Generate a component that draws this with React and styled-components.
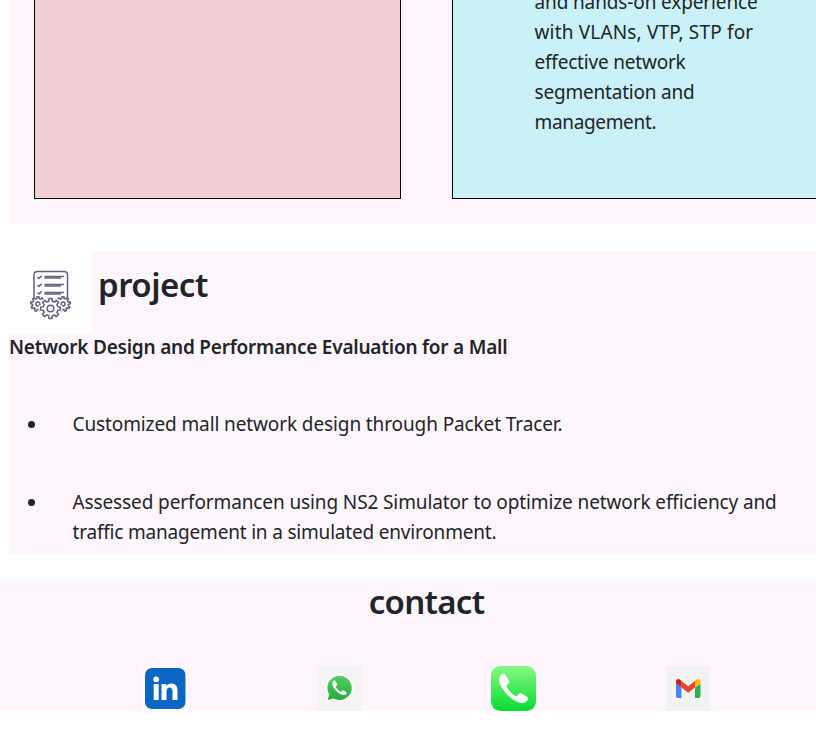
import React from 'react';
import styled, { createGlobalStyle } from 'styled-components';

const GlobalStyle = createGlobalStyle`
  * { box-sizing: border-box; }
  html, body { margin: 0; background: #fff; overflow: hidden; }
  body {
    font-family: "Noto Sans", "Open Sans", sans-serif;
    font-size: 19px;
    line-height: 30px;
    color: #212529;
  }
`;

const Page = styled.main`
  width: 816px;
  height: 733px;
  overflow: hidden;
`;

const Skills = styled.section`
  display: flex;
  align-items: flex-end;
  gap: 51px;
  height: 224px;
  margin-left: 9px;
  padding: 0 0 25px 25px;
  background: #fff5fd;
  overflow: hidden;
`;

const Card = styled.article`
  flex: none;
  display: flex;
  flex-direction: column;
  justify-content: flex-end;
  width: 367px;
  height: 240px;
  padding: 0 40px 61px 81.5px;
  border: 1px solid #000;
  background: ${(p) => p.$fill};
`;

const Line = styled.span`
  display: block;
  white-space: nowrap;
  letter-spacing: ${(p) => p.$tracking || 0}px;
`;

const Project = styled.section`
  height: 303px;
  margin: 27px 0 0 9px;
  background: #fff5fd;
`;

const ProjectHeader = styled.header`
  display: flex;
  gap: 6px;
  height: 81px;
`;

const IconTile = styled.div`
  display: flex;
  flex: none;
  width: 83px;
  height: 83px;
  background: #fff;
`;

const Title = styled.h2`
  margin: ${(p) => p.$top}px 0 0;
  font-size: 33px;
  line-height: 42px;
  font-weight: 600;
  letter-spacing: ${(p) => p.$tracking}px;
`;

const Subtitle = styled.h3`
  margin: 0;
  font-size: 19px;
  line-height: 30px;
  font-weight: 600;
`;

const List = styled.ul`
  display: flex;
  flex-direction: column;
  gap: 48px;
  margin: 47px 0 0;
  padding: 0;
  list-style: none;
`;

const Item = styled.li`
  display: flex;
  gap: 37.5px;
  padding-left: 19px;

  &::before {
    content: "";
    flex: none;
    width: 7px;
    height: 7px;
    margin-top: 12px;
    border-radius: 50%;
    background: #212529;
  }
`;

const Contact = styled.section`
  display: flex;
  flex-direction: column;
  align-items: center;
  height: 131px;
  margin-top: 26px;
  background: #fff5fd;
`;

const ContactTitle = styled(Title)`
  padding-left: 37px;
`;

const Links = styled.nav`
  display: grid;
  grid-template-columns: repeat(4, 45px);
  column-gap: 129.2px;
  margin-top: auto;
  margin-left: 37.6px;
`;

const ContactLink = styled.a`
  display: block;
  height: 45px;

  svg { display: block; }
`;

const gearPath = (cx, cy, inner, outer, teeth) => {
  const step = (Math.PI * 2) / teeth;
  const points = [];
  for (let i = 0; i < teeth; i += 1) {
    const a = i * step - Math.PI / 2;
    [[-0.3, inner], [-0.2, outer], [0.2, outer], [0.3, inner]].forEach(([o, r]) => {
      points.push(`${(cx + Math.cos(a + o * step) * r).toFixed(2)} ${(cy + Math.sin(a + o * step) * r).toFixed(2)}`);
    });
  }
  return `M${points.join('L')}Z`;
};

const ProjectIcon = () => (
  <svg width="83" height="83" viewBox="0 0 83 83" fill="none" stroke="#62617c" strokeWidth="1.5" strokeLinejoin="round">
    <path d="M25 47V24q0-3.500 3.500-3.500H55q3.500 0 3.500 3.500V47" />
    <path d="M28.500 26l1.500 1.500 2.700-2.700M28.500 34l1.500 1.500 2.700-2.700M28.500 41.500l1.500 1.500 2.700-2.700" />
    <path d="M35.500 25.500H55M35.500 33.500H55M35.500 41.500H55" />
    <path d="M35.500 27H52M35.500 35H52M35.500 43H52" strokeWidth="1.4" />
    <path d={gearPath(29, 53, 5.5, 7.4, 9)} fill="#fff" />
    <circle cx="29" cy="53" r="2" />
    <path d={gearPath(54, 53, 5.5, 7.4, 9)} fill="#fff" />
    <circle cx="54" cy="53" r="2" />
    <path d={gearPath(41.5, 57.5, 7.5, 10, 8)} fill="#fff" stroke="#fff" strokeWidth="4" />
    <path d={gearPath(41.5, 57.5, 7.5, 10, 8)} fill="#fff" />
    <circle cx="41.500" cy="57.500" r="3.300" />
  </svg>
);

const LinkedInIcon = () => (
  <svg width="45" height="45" viewBox="0 0 45 45">
    <rect width="44" height="45" fill="#fff" />
    <rect x="2" y="2" width="40.500" height="41" rx="7" fill="#0a66c2" />
    <circle cx="13.200" cy="13.300" r="2.900" fill="#fff" />
    <path fill="#fff" d="M10.700 18h5v16h-5zM18.500 18h4.800v2.200c1-1.700 2.700-2.600 5-2.600 4.500 0 6.200 2.800 6.200 7.400v9h-5v-8.200c0-2.400-.6-4.200-2.700-4.200-2.400 0-3.300 1.700-3.300 4.200V34h-5z" />
  </svg>
);

const HANDSET = 'M6.600 2.500C5.600 2.900 3.400 5 3.300 7.700c-.2 4.600 3.200 10.500 8.200 15.500s10.900 8.400 15.500 8.200c2.700-.1 4.800-2.300 5.200-3.300.4-1 .2-1.900-.7-2.500l-5.600-3.700c-.9-.6-1.900-.4-2.600.3l-1.800 1.900c-.6.600-1.300.6-2 .2-1.500-.8-3.300-2.200-4.900-3.800s-3-3.400-3.800-4.900c-.4-.7-.4-1.400.2-2l1.900-1.800c.7-.7.9-1.700.3-2.600L9.500 3.200c-.7-1-1.900-1.100-2.900-.7z';

const WhatsAppIcon = () => (
  <svg width="45" height="45" viewBox="0 0 45 45">
    <defs>
      <linearGradient id="whatsappGreen" x1="0" y1="0" x2="0" y2="1">
        <stop offset="0" stopColor="#56cf63" />
        <stop offset="1" stopColor="#25ab3b" />
      </linearGradient>
    </defs>
    <rect width="45" height="45" fill="#f4f4f4" />
    <path d="M9.500 35l1.800-6.700A13 13 0 1 1 16.400 33.200z" fill="#fff" stroke="#fff" strokeWidth="1.800" strokeLinejoin="round" />
    <path d="M10.700 33.900l1.500-5.600A12.200 12.200 0 1 1 16.600 32.500z" fill="url(#whatsappGreen)" />
    <path d={HANDSET} fill="#fff" transform="translate(13.600 13.400) scale(.5)" />
  </svg>
);

const PhoneIcon = () => (
  <svg width="45" height="45" viewBox="0 0 45 45">
    <defs>
      <linearGradient id="phoneGreen" x1="0" y1="0" x2="0" y2="1">
        <stop offset="0" stopColor="#87f982" />
        <stop offset="1" stopColor="#06dc32" />
      </linearGradient>
    </defs>
    <rect width="45" height="45" rx="9.500" fill="url(#phoneGreen)" />
    <path d={HANDSET} fill="#fff" transform="translate(4.800 5.500)" />
  </svg>
);

const GmailIcon = () => (
  <svg width="45" height="45" viewBox="0 0 45 45">
    <rect width="44" height="45" fill="#f2f2f2" />
    <path fill="#4285f4" d="M10 17.500l5.500 4V32H12q-2 0-2-2z" />
    <path fill="#34a853" d="M34.500 17.500l-5.500 4V32h3.500q2 0 2-2z" />
    <path fill="#ea4335" d="M15.500 15l6.750 5.200L29 15v6.500l-6.750 5.300-6.750-5.300z" />
    <path fill="#c5221f" d="M10 17.500V15.700c0-2.700 2.600-3.200 4.200-2l1.300 1v6.900z" />
    <path fill="#fbbc04" d="M34.500 17.500V15.700c0-2.700-2.600-3.200-4.200-2l-1.300 1v6.900z" />
  </svg>
);

const contacts = [
  ['LinkedIn', LinkedInIcon],
  ['WhatsApp', WhatsAppIcon],
  ['Phone', PhoneIcon],
  ['Gmail', GmailIcon],
];

export default function App() {
  return (
    <Page>
      <GlobalStyle />
      <Skills>
        <Card $fill="#f2ced6" />
        <Card $fill="#caf0f8">
          <Line $tracking={-0.13}>and hands-on experience</Line>
          <Line $tracking={0.17}>with VLANs, VTP, STP for</Line>
          <Line $tracking={-0.2}>effective network</Line>
          <Line $tracking={-0.2}>segmentation and</Line>
          <Line $tracking={-0.34}>management.</Line>
        </Card>
      </Skills>
      <Project>
        <ProjectHeader>
          <IconTile><ProjectIcon /></IconTile>
          <Title $top={13} $tracking={-0.5}>project</Title>
        </ProjectHeader>
        <Subtitle>
          <Line $tracking={-0.22}>Network Design and Performance Evaluation for a Mall</Line>
        </Subtitle>
        <List>
          <Item>
            <Line $tracking={-0.11}>Customized mall network design through Packet Tracer.</Line>
          </Item>
          <Item>
            <div>
              <Line $tracking={-0.115}>Assessed performancen using NS2 Simulator to optimize network efficiency and</Line>
              <Line $tracking={-0.19}>traffic management in a simulated environment.</Line>
            </div>
          </Item>
        </List>
      </Project>
      <Contact>
        <ContactTitle $top={1} $tracking={-0.7}>contact</ContactTitle>
        <Links>
          {contacts.map(([name, Icon]) => (
            <ContactLink key={name} aria-label={name}><Icon /></ContactLink>
          ))}
        </Links>
      </Contact>
    </Page>
  );
}
